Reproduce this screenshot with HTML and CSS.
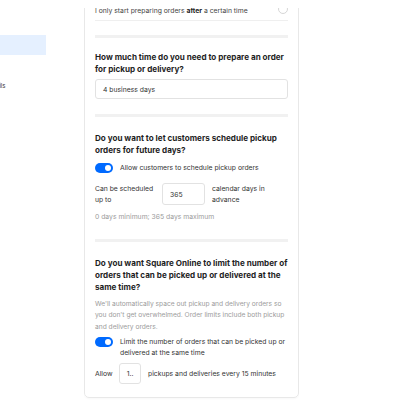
FILE: index.html
```html
<!DOCTYPE html>
<html>
<head>
<meta charset="utf-8">
<link rel="stylesheet" href="styles.css">
</head>
<body>
<div class="page">
  <aside class="sidebar">
    <nav class="nav">
      <div class="nav-item active"><span class="nav-label">Fulfillment</span></div>
      <div class="nav-item"><span class="nav-label">Order details</span></div>
    </nav>
  </aside>
  <main class="main">
    <div class="viewport">
      <section class="card">
        <div class="option-row">
          <span class="option-text">I only start preparing orders <b>after</b> a certain time</span>
          <span class="radio"></span>
        </div>
        <div class="section-bar"></div>

        <h2 class="q first">How much time do you need to prepare an order for pickup or delivery?</h2>
        <div class="field wide">4 business days</div>
        <div class="section-bar bar2"></div>

        <h2 class="q">Do you want to let customers schedule pickup orders for future days?</h2>
        <div class="toggle-row">
          <span class="toggle"><span class="knob"></span></span>
          <span class="toggle-text">Allow customers to schedule pickup orders</span>
        </div>
        <div class="inline-row">
          <span class="inline-label">Can be scheduled up to</span>
          <span class="field small">365</span>
          <span class="inline-label">calendar days in advance</span>
        </div>
        <p class="hint">0 days minimum; 365 days maximum</p>
        <div class="section-bar bar3"></div>

        <h2 class="q">Do you want Square Online to limit the number of orders that can be picked up or delivered at the same time?</h2>
        <p class="desc">We'll automatically space out pickup and delivery orders so you don't get overwhelmed. Order limits include both pickup and delivery orders.</p>
        <div class="toggle-row top">
          <span class="toggle"><span class="knob"></span></span>
          <span class="toggle-text">Limit the number of orders that can be picked up or delivered at the same time</span>
        </div>
        <div class="allow-row">
          <span class="allow-label">Allow</span>
          <span class="field tiny">1..</span>
          <span class="allow-text">pickups and deliveries every 15 minutes</span>
        </div>
      </section>
    </div>
  </main>
</div>
</body>
</html>
```

FILE: styles.css
```css
* { box-sizing: border-box; }
html, body { margin: 0; padding: 0; background: #fff; }
body {
  font-family: Inter, "Noto Sans", sans-serif;
  color: #3a3a3a;
  width: 396px;
  height: 400px;
  overflow: hidden;
}
.page {
  display: flex;
  height: 400px;
}
.sidebar {
  width: 84px;
  flex: none;
}
.nav {
  width: 46px;
  overflow: hidden;
  padding-top: 35px;
  display: flex;
  flex-direction: column;
  gap: 20px;
}
.nav-item {
  height: 20px;
  display: flex;
  align-items: center;
  justify-content: flex-end;
  font-size: 6px;
  color: #333;
  white-space: nowrap;
}
.nav-item.active {
  background: #e5f0ff;
  color: transparent;
}
.nav-item:nth-child(2) {
  justify-content: flex-start;
}
.nav-item:nth-child(2) .nav-label {
  margin-left: -31px;
}
.main {
  width: 215px;
  flex: none;
  padding-top: 8px;
}
.viewport {
  height: 392px;
  overflow: hidden;
}
.card {
  margin-top: -8px;
  height: 398px;
  border: 1px solid #e8e8e8;
  border-radius: 0 0 5px 5px;
  padding: 0 10px 0 10px;
  box-shadow: 0 1px 2px rgba(0,0,0,0.03);
}
.option-row {
  height: 20px;
  display: flex;
  align-items: center;
  justify-content: space-between;
  border-bottom: 1px solid #efefef;
  font-size: 6.8px;
  color: #444;
  padding-top: 0;
}
.option-text b { font-weight: 700; color: #222; }
.radio {
  width: 10px;
  height: 10px;
  border: 1px solid #d6d6d6;
  border-radius: 50%;
  margin-right: 0;
  margin-top: -4px;
}
.section-bar {
  height: 3px;
  background: #f1f1f1;
  margin-top: 14px;
}
.q {
  margin: 15px 0 0;
  font-size: 8.1px;
  line-height: 12px;
  font-weight: 700;
  color: #1e1e1e;
}
.q.first { margin-top: 13px; }
.field {
  border: 1px solid #e2e2e2;
  border-radius: 3px;
  font-size: 6.8px;
  color: #333;
  display: flex;
  align-items: center;
}
.field.wide {
  margin-top: 4px;
  height: 20px;
  padding-left: 7px;
}
.bar2 { margin-top: 15px; }
.toggle-row {
  display: flex;
  align-items: center;
  gap: 7px;
  margin-top: 6px;
  font-size: 6.8px;
  line-height: 11px;
  color: #333;
}
.toggle-row.top {
  align-items: flex-start;
  margin-top: 3px;
}
.toggle-row.top .toggle { margin-top: 1px; }
.toggle {
  width: 18px;
  height: 10px;
  border-radius: 5px;
  background: #006aff;
  flex: none;
  display: flex;
  align-items: center;
  justify-content: flex-end;
  padding-right: 2px;
}
.knob {
  width: 6px;
  height: 6px;
  border-radius: 50%;
  background: #fff;
}
.inline-row {
  display: flex;
  align-items: center;
  margin-top: 10px;
  font-size: 6.8px;
  line-height: 11px;
  color: #333;
}
.inline-label { width: 67px; flex: none; }
.field.small {
  width: 43px;
  height: 22px;
  padding-left: 7px;
  margin-right: 7px;
  flex: none;
}
.hint {
  margin: 6px 0 0;
  font-size: 6.8px;
  line-height: 11px;
  color: #9b9b9b;
}
.bar3 { margin-top: 17px; }
.desc {
  margin: 6px 0 0;
  font-size: 6.65px;
  line-height: 11.3px;
  color: #9b9b9b;
}
.allow-row {
  display: flex;
  align-items: center;
  margin-top: 5px;
  font-size: 6.8px;
  color: #333;
}
.allow-label { width: 24px; flex: none; }
.field.tiny {
  width: 22px;
  height: 21px;
  justify-content: center;
  margin-right: 7px;
  flex: none;
}
```
